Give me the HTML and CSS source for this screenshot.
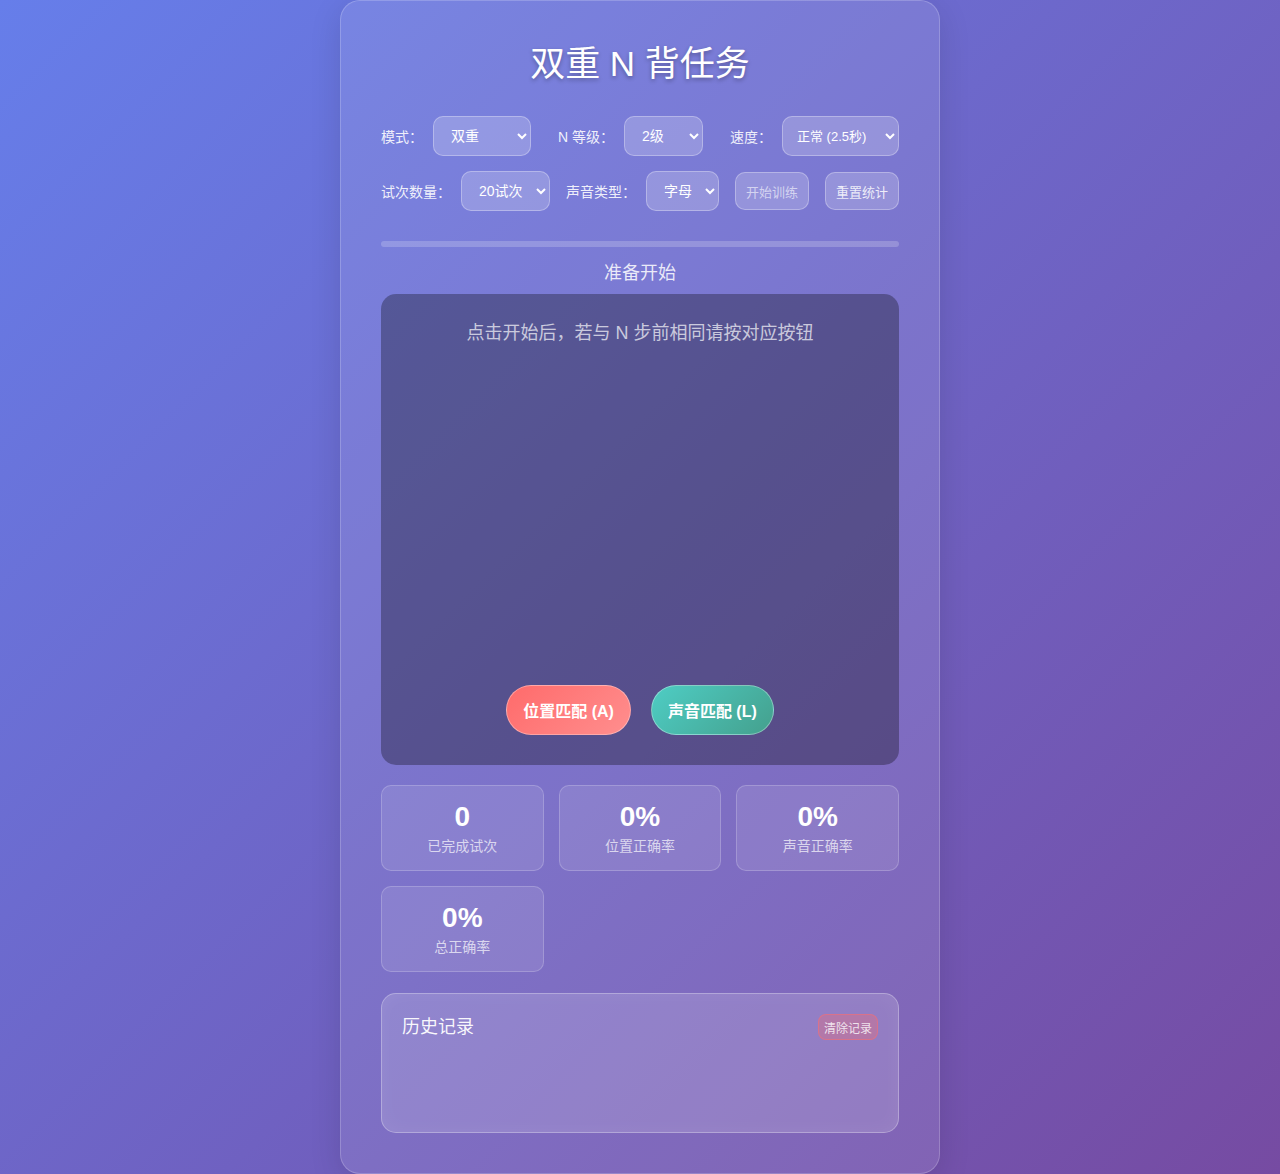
FILE: index.html
```html
<!DOCTYPE html>
<html lang="zh-CN">
<head>
<meta charset="utf-8">
<title>双重 N 背任务</title>
<link rel="stylesheet" href="styles.css">
</head>
<body>
<div class="container">
  <h1 class="title">双重 N 背任务</h1>

  <div class="controls">
    <div class="row">
      <div class="field">
        <label class="lbl">模式：</label>
        <select class="sel w-mode"><option>双重</option><option>仅位置</option><option>仅声音</option></select>
      </div>
      <div class="field">
        <label class="lbl">N 等级：</label>
        <select class="sel w-n"><option>2级</option><option>1级</option><option>3级</option></select>
      </div>
      <div class="field">
        <label class="lbl">速度：</label>
        <select class="sel w-speed"><option>正常 (2.5秒)</option><option>慢速 (3秒)</option></select>
      </div>
    </div>
    <div class="row">
      <div class="field">
        <label class="lbl">试次数量：</label>
        <select class="sel w-trials"><option>20试次</option><option>30试次</option></select>
      </div>
      <div class="field">
        <label class="lbl">声音类型：</label>
        <select class="sel w-sound"><option>字母</option><option>数字</option></select>
      </div>
      <button class="ctl-btn dim">开始训练</button>
      <button class="ctl-btn">重置统计</button>
    </div>
  </div>

  <div class="progress"><div class="progress-fill"></div></div>

  <div class="status">准备开始</div>

  <div class="game">
    <p class="instructions">点击开始后，若与 N 步前相同请按对应按钮</p>
    <div class="actions">
      <button class="match match-pos">位置匹配 (A)</button>
      <button class="match match-snd">声音匹配 (L)</button>
    </div>
  </div>

  <div class="stats">
    <div class="stat"><div class="stat-val">0</div><div class="stat-lbl">已完成试次</div></div>
    <div class="stat"><div class="stat-val">0%</div><div class="stat-lbl">位置正确率</div></div>
    <div class="stat"><div class="stat-val">0%</div><div class="stat-lbl">声音正确率</div></div>
    <div class="stat"><div class="stat-val">0%</div><div class="stat-lbl">总正确率</div></div>
  </div>

  <div class="history">
    <div class="history-head">
      <h3 class="history-title">历史记录</h3>
      <button class="clear-btn">清除记录</button>
    </div>
  </div>
</div>
</body>
</html>
```

FILE: styles.css
```css
* { box-sizing: border-box; }

html, body {
  margin: 0;
  padding: 0;
}

body {
  min-height: 100vh;
  background: linear-gradient(135deg, #667eea 0%, #764ba2 100%);
  font-family: "Liberation Sans", Arial, "Noto Sans CJK SC", sans-serif;
  color: #fff;
}

.container {
  width: 600px;
  margin: 0 auto;
  padding: 40px;
  background: rgba(255, 255, 255, 0.1);
  border: 1px solid rgba(255, 255, 255, 0.2);
  border-radius: 20px;
  box-shadow: 0 8px 32px rgba(0, 0, 0, 0.12);
}

.title {
  margin: 2px 0 32px;
  text-align: center;
  font-size: 35px;
  font-weight: 400;
  line-height: 41px;
  text-shadow: 0 2px 4px rgba(0, 0, 0, 0.3);
}

.controls {
  display: flex;
  flex-direction: column;
  gap: 15px;
}

.row {
  display: flex;
  justify-content: space-between;
  align-items: center;
}

.field {
  display: flex;
  align-items: center;
  gap: 10px;
}

.lbl {
  font-size: 14px;
  color: rgba(255, 255, 255, 0.9);
  white-space: nowrap;
}

.sel {
  height: 40px;
  padding: 0 8px 0 13px;
  font-family: inherit;
  font-size: 14px;
  color: #fff;
  background: rgba(255, 255, 255, 0.2);
  border: 1px solid rgba(255, 255, 255, 0.3);
  border-radius: 10px;
}

.sel option { color: #333; }

.w-mode { width: 98px; }
.w-n { width: 79px; }
.w-speed { width: 117px; font-size: 13px; padding-left: 10px; }
.w-trials { width: 89px; }
.w-sound { width: 73px; }

.ctl-btn {
  height: 38px;
  padding: 0 10px;
  font-family: inherit;
  font-size: 13px;
  color: rgba(255, 255, 255, 0.85);
  background: rgba(255, 255, 255, 0.2);
  border: 1px solid rgba(255, 255, 255, 0.3);
  border-radius: 10px;
}

.ctl-btn.dim { color: rgba(255, 255, 255, 0.6); }

.progress {
  margin-top: 30px;
  height: 6px;
  border-radius: 3px;
  background: rgba(255, 255, 255, 0.2);
  overflow: hidden;
}

.progress-fill {
  width: 0;
  height: 100%;
  background: #4ecdc4;
}

.status {
  margin-top: 16px;
  text-align: center;
  font-size: 18px;
  line-height: 21px;
  color: rgba(255, 255, 255, 0.85);
}

.game {
  margin-top: 10px;
  height: 471px;
  padding: 28px 30px 30px;
  display: flex;
  flex-direction: column;
  justify-content: space-between;
  background: rgba(0, 0, 0, 0.3);
  border-radius: 15px;
}

.instructions {
  margin: 0;
  text-align: center;
  font-size: 18px;
  line-height: 22px;
  color: rgba(255, 255, 255, 0.7);
}

.actions {
  display: flex;
  justify-content: center;
  gap: 20px;
}

.match {
  height: 50px;
  padding: 0 16px;
  font-family: inherit;
  font-size: 16px;
  font-weight: 700;
  color: #fff;
  border: 1px solid rgba(255, 255, 255, 0.35);
  border-radius: 25px;
}

.match-pos { background: linear-gradient(135deg, #ff6b6b 0%, #ff8e8e 100%); }
.match-snd { background: linear-gradient(135deg, #4ecdc4 0%, #44a08d 100%); }

.stats {
  margin-top: 20px;
  display: grid;
  grid-template-columns: repeat(3, 1fr);
  gap: 15px;
}

.stat {
  padding: 15px 10px;
  text-align: center;
  background: rgba(255, 255, 255, 0.1);
  border: 1px solid rgba(255, 255, 255, 0.2);
  border-radius: 10px;
}

.stat-val {
  font-size: 28px;
  font-weight: 700;
  line-height: 32px;
}

.stat-lbl {
  margin-top: 5px;
  font-size: 14px;
  line-height: 17px;
  color: rgba(255, 255, 255, 0.7);
}

.history {
  margin-top: 21px;
  min-height: 140px;
  padding: 20px;
  background: rgba(255, 255, 255, 0.15);
  border: 1px solid rgba(255, 255, 255, 0.3);
  border-radius: 15px;
  box-shadow: inset 0 0 20px rgba(255, 255, 255, 0.05);
}

.history-head {
  display: flex;
  justify-content: space-between;
  align-items: center;
}

.history-title {
  margin: 0;
  font-size: 18px;
  font-weight: 400;
  line-height: 22px;
  color: rgba(255, 255, 255, 0.95);
}

.clear-btn {
  height: 26px;
  padding: 0 5px;
  font-family: inherit;
  font-size: 12px;
  color: rgba(255, 255, 255, 0.8);
  background: rgba(255, 107, 107, 0.3);
  border: 1px solid rgba(255, 107, 107, 0.5);
  border-radius: 8px;
}
```
